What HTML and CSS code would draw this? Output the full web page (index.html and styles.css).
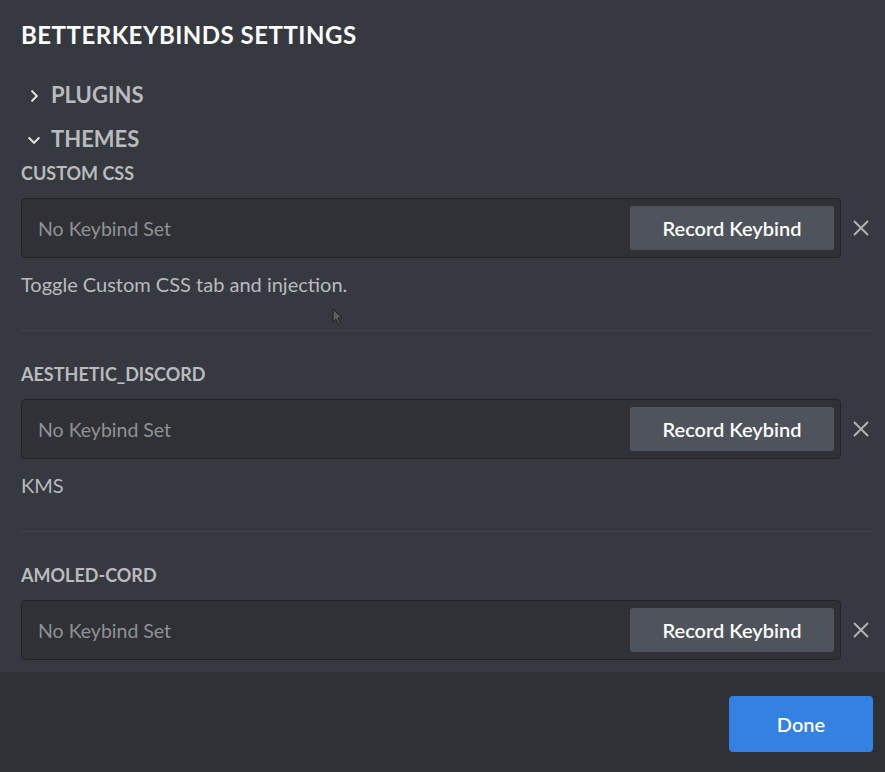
FILE: index.html
```html
<!DOCTYPE html>
<html>
<head>
<meta charset="utf-8">
<link rel="stylesheet" href="styles.css">
</head>
<body>
<div class="modal">
  <div class="content">
    <h2 class="title">BetterKeybinds Settings</h2>
    <div class="category">
      <span class="chev"><svg width="12" height="12" viewBox="0 0 12 12"><path d="M3.5 0.6 L8.8 6 L3.5 11.4" fill="none" stroke="#e3e4e6" stroke-width="2"/></svg></span>
      <span class="cat-name">Plugins</span>
    </div>
    <div class="category">
      <span class="chev open"><svg width="12" height="12" viewBox="0 0 12 12"><path d="M3.5 0.6 L8.8 6 L3.5 11.4" fill="none" stroke="#e3e4e6" stroke-width="2"/></svg></span>
      <span class="cat-name">Themes</span>
    </div>

    <div class="item">
      <div class="label">Custom CSS</div>
      <div class="row">
        <div class="input">
          <span class="placeholder">No Keybind Set</span>
          <button class="record">Record Keybind</button>
        </div>
        <span class="clear"><svg width="16" height="16" viewBox="0 0 16 16"><path d="M1 1 L15 15 M15 1 L1 15" stroke="#b0b2b5" stroke-width="2"/></svg></span>
      </div>
      <div class="desc">Toggle Custom CSS tab and injection.</div>
    </div>
    <div class="divider"></div>

    <div class="item">
      <div class="label">Aesthetic_Discord</div>
      <div class="row">
        <div class="input">
          <span class="placeholder">No Keybind Set</span>
          <button class="record">Record Keybind</button>
        </div>
        <span class="clear"><svg width="16" height="16" viewBox="0 0 16 16"><path d="M1 1 L15 15 M15 1 L1 15" stroke="#b0b2b5" stroke-width="2"/></svg></span>
      </div>
      <div class="desc">KMS</div>
    </div>
    <div class="divider"></div>

    <div class="item">
      <div class="label">Amoled-Cord</div>
      <div class="row">
        <div class="input">
          <span class="placeholder">No Keybind Set</span>
          <button class="record">Record Keybind</button>
        </div>
        <span class="clear"><svg width="16" height="16" viewBox="0 0 16 16"><path d="M1 1 L15 15 M15 1 L1 15" stroke="#b0b2b5" stroke-width="2"/></svg></span>
      </div>
    </div>
  </div>
  <div class="footer">
    <button class="done">Done</button>
  </div>
  <svg class="cursor" width="12" height="18" viewBox="0 0 12 18"><path d="M1 1 L1 14 L4 11 L6.5 16.5 L8.5 15.5 L6 10 L10 10 Z" fill="#5a5d62" stroke="#1e1f22" stroke-width="1"/></svg>
</div>
</body>
</html>
```

FILE: styles.css
```css
* { box-sizing: border-box; }
html, body {
  margin: 0;
  padding: 0;
  background: #36393f;
}
body {
  font-family: Lato, "Open Sans", sans-serif;
  color: #b9bbbe;
}
.modal {
  position: relative;
  width: 885px;
  height: 772px;
  display: flex;
  flex-direction: column;
  overflow: hidden;
}
.content {
  height: 672px;
  overflow: hidden;
  padding: 20px 12px 0 21px;
  background: #36393f;
}
.title {
  margin: 0;
  font-size: 24px;
  line-height: 30px;
  font-weight: 700;
  letter-spacing: 0.5px;
  color: #ffffff;
  text-transform: uppercase;
}
.category {
  display: flex;
  align-items: center;
  height: 28px;
  margin-top: 16px;
}
.title + .category { margin-top: 31px; }
.chev {
  width: 16px;
  margin-left: 5px;
  margin-right: 9px;
  display: flex;
  justify-content: center;
  padding-top: 2px;
}
.chev.open svg { transform: rotate(90deg); }
.cat-name {
  font-size: 22px;
  line-height: 28px;
  font-weight: 700;
  color: #b9bbbe;
  text-transform: uppercase;
}
.item { padding-top: 9px; }
.divider + .item { padding-top: 32px; }
.label {
  font-size: 18px;
  line-height: 22px;
  font-weight: 700;
  color: #b9bbbe;
  text-transform: uppercase;
  margin-bottom: 14px;
}
.row {
  display: flex;
  align-items: center;
}
.input {
  width: 820px;
  height: 60px;
  display: flex;
  align-items: center;
  justify-content: space-between;
  padding: 0 6px 0 16px;
  background: #303136;
  border: 1px solid #222327;
  border-radius: 4px;
}
.placeholder {
  font-size: 19.5px;
  color: #8e9195;
}
.record {
  width: 204px;
  height: 44px;
  border: none;
  border-radius: 3px;
  background: #4f545c;
  color: #ffffff;
  font-family: Lato, "Open Sans", sans-serif;
  font-size: 20px;
  font-weight: 600;
  padding: 0;
}
.clear {
  margin-left: 12px;
  width: 16px;
  height: 16px;
  display: flex;
}
.desc {
  margin-top: 14px;
  font-size: 20px;
  line-height: 24px;
  color: #b9bbbe;
}
.divider {
  height: 1px;
  background: #42454b;
  margin-top: 34px;
}
.footer {
  flex: 1;
  background: #2f3136;
  display: flex;
  justify-content: flex-end;
  align-items: flex-start;
  padding: 24px 12px 0 0;
}
.done {
  width: 144px;
  height: 56px;
  border: none;
  border-radius: 4px;
  background: #3381e0;
  color: #ffffff;
  font-family: Lato, "Open Sans", sans-serif;
  font-size: 20px;
  font-weight: 600;
  padding: 0;
}
.cursor {
  position: absolute;
  left: 332px;
  top: 308px;
}
```
